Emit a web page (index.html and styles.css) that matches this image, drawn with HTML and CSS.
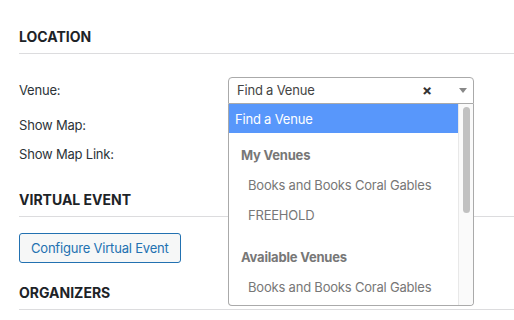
FILE: index.html
```html
<!DOCTYPE html>
<html lang="en">
<head>
  <meta charset="UTF-8" />
  <title>Event Location</title>
  <link rel="stylesheet" href="styles.css">
</head>
<body>

  <div class="panel">

    <section class="section">
      <h3 class="section-title">Location</h3>
      <div class="rows">
        <div class="row row-venue">
          <span class="label">Venue:</span>
          <div class="venue-select">
            <div class="select-box">
              <span class="select-text">Find a Venue</span>
              <span class="select-clear">&times;</span>
              <span class="select-arrow"></span>
            </div>
            <div class="dropdown">
              <ul class="results">
                <li class="option highlighted">Find a Venue</li>
                <li class="group">
                  <div class="group-label">My Venues</div>
                  <div class="option nested">Books and Books Coral Gables</div>
                  <div class="option nested">FREEHOLD</div>
                </li>
                <li class="group group-second">
                  <div class="group-label">Available Venues</div>
                  <div class="option nested">Books and Books Coral Gables</div>
                </li>
              </ul>
              <div class="scroll-track"><div class="scroll-thumb"></div></div>
            </div>
          </div>
        </div>
        <div class="row"><span class="label">Show Map:</span></div>
        <div class="row"><span class="label">Show Map Link:</span></div>
      </div>
    </section>

    <section class="section">
      <h3 class="section-title">Virtual Event</h3>
      <button class="btn">Configure Virtual Event</button>
    </section>

    <section class="section">
      <h3 class="section-title">Organizers</h3>
    </section>

  </div>

</body>
</html>
```

FILE: styles.css
```css
* { box-sizing: border-box; margin: 0; padding: 0; }

body {
  font-family: Inter, 'Liberation Sans', sans-serif;
  font-size: 13px;
  letter-spacing: -0.2px;
  color: #2c3338;
  background: #fff;
  overflow: hidden;
}

.panel {
  padding: 0 0 0 19px;
}

.section-title {
  font-size: 14px;
  font-weight: 700;
  line-height: 20px;
  letter-spacing: 0;
  text-transform: uppercase;
  color: #1d2327;
  padding-bottom: 6px;
  border-bottom: 1px solid #dcdcde;
  margin-top: 22px;
}

.section:first-child .section-title {
  margin-top: 27px;
}

.rows {
  margin-top: 20px;
  display: flex;
  flex-direction: column;
}

.row {
  display: flex;
  align-items: center;
  min-height: 29px;
}

.row-venue {
  min-height: 32px;
  margin-bottom: 4px;
}

.label {
  width: 209px;
  flex-shrink: 0;
}

.venue-select {
  position: relative;
  width: 246px;
}

.select-box {
  display: flex;
  align-items: center;
  height: 27px;
  padding: 0 6px 0 8px;
  border: 1px solid #aaa;
  border-radius: 4px 4px 0 0;
  color: #444;
  background: #fff;
}

.select-text { flex: 1; }

.select-clear {
  font-weight: 700;
  font-size: 15px;
  color: #333;
  margin-right: 27px;
}

.select-arrow {
  width: 0;
  height: 0;
  border-left: 4px solid transparent;
  border-right: 4px solid transparent;
  border-top: 5px solid #888;
}

.dropdown {
  position: absolute;
  top: 100%;
  left: 0;
  width: 100%;
  height: 202px;
  display: flex;
  border: 1px solid #aaa;
  border-top: none;
  border-radius: 0 0 4px 4px;
  background: #fff;
  overflow: hidden;
  z-index: 10;
}

.results {
  list-style: none;
  flex: 1;
}

.option {
  height: 30px;
  line-height: 30px;
  padding: 0 6px;
  color: #777;
}

.option.highlighted {
  height: 29px;
  line-height: 30px;
  background: #5897fb;
  color: #fff;
}

.group { padding-top: 7px; }
.group-second { padding-top: 12px; }

.group-label {
  height: 30px;
  line-height: 30px;
  padding: 0 12px;
  font-weight: 700;
  color: #777;
}

.option.nested { padding-left: 19px; }

.scroll-track {
  width: 15px;
  flex-shrink: 0;
  border-left: 1px solid #e8e8e8;
  background: #fafafa;
  padding: 3px 0 0 4px;
}

.scroll-thumb {
  width: 7px;
  height: 106px;
  border-radius: 4px;
  background: #c1c1c1;
}

.btn {
  margin-top: 16px;
  height: 30px;
  padding: 0 11px;
  font-family: inherit;
  font-size: 13px;
  letter-spacing: -0.2px;
  color: #2271b1;
  background: #f6f7f7;
  border: 1px solid #2271b1;
  border-radius: 3px;
}

.section:last-child .section-title {
  margin-top: 20px;
}
```
